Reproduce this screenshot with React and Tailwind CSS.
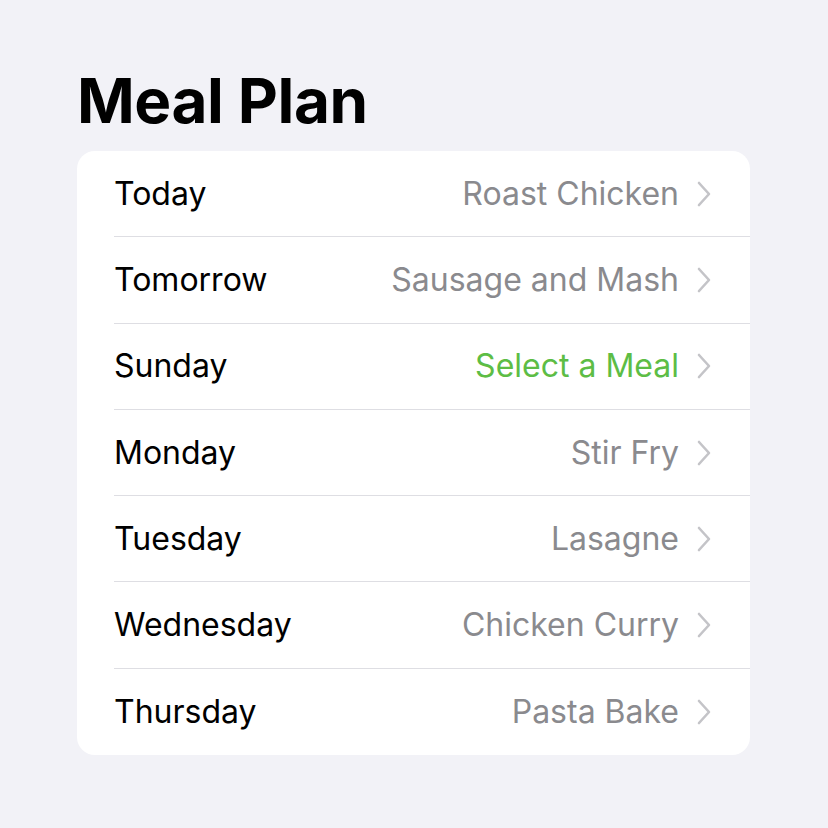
const days = [
  { day: "Today", meal: "Roast Chicken" },
  { day: "Tomorrow", meal: "Sausage and Mash" },
  { day: "Sunday", meal: "Select a Meal", empty: true },
  { day: "Monday", meal: "Stir Fry" },
  { day: "Tuesday", meal: "Lasagne" },
  { day: "Wednesday", meal: "Chicken Curry" },
  { day: "Thursday", meal: "Pasta Bake" },
];

function Chevron() {
  return (
    <svg width="16" height="26" viewBox="0 0 16 26" className="ml-[17px] shrink-0">
      <path
        d="M3 2 L13 13 L3 24"
        fill="none"
        stroke="#c4c4c8"
        strokeWidth="2.6"
        strokeLinecap="round"
        strokeLinejoin="round"
      />
    </svg>
  );
}

export default function App() {
  return (
    <div
      className="w-[828px] h-[828px] bg-[#f2f2f7] pt-[70px] px-[77px]"
      style={{ fontFamily: "Inter, 'Noto Sans', sans-serif" }}
    >
      <h1 className="text-[62px] font-bold leading-none tracking-[-0.4px] text-black mb-[19px]">
        Meal Plan
      </h1>

      <div className="bg-white rounded-[18px] w-[673px] overflow-hidden">
        {days.map((d, i) => (
          <div key={d.day} className="pl-[37px]">
            <div
              className={
                "h-[86.3px] flex items-center pr-[38px] " +
                (i < days.length - 1 ? "border-b border-[#dedee3]" : "")
              }
            >
              <span className="text-[32px] text-black flex-1">{d.day}</span>
              <span
                className={
                  "text-[32px] " + (d.empty ? "text-[#5dbd45]" : "text-[#8a8a8e]")
                }
              >
                {d.meal}
              </span>
              <Chevron />
            </div>
          </div>
        ))}
      </div>
    </div>
  );
}
